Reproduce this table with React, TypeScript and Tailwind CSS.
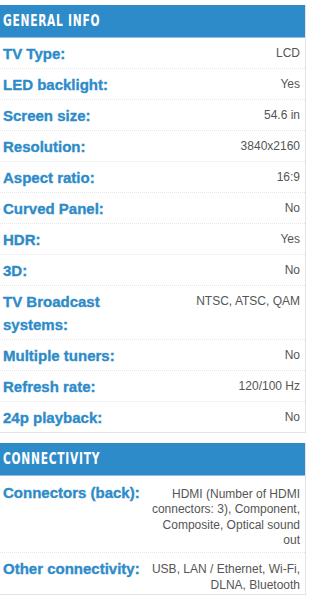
import React from "react";

type Spec = { label: string; value: string };

const general: Spec[] = [
  { label: "TV Type:", value: "LCD" },
  { label: "LED backlight:", value: "Yes" },
  { label: "Screen size:", value: "54.6 in" },
  { label: "Resolution:", value: "3840x2160" },
  { label: "Aspect ratio:", value: "16:9" },
  { label: "Curved Panel:", value: "No" },
  { label: "HDR:", value: "Yes" },
  { label: "3D:", value: "No" },
  { label: "TV Broadcast systems:", value: "NTSC, ATSC, QAM" },
  { label: "Multiple tuners:", value: "No" },
  { label: "Refresh rate:", value: "120/100 Hz" },
  { label: "24p playback:", value: "No" },
];

const connectivity: Spec[] = [
  { label: "Connectors (back):", value: "HDMI (Number of HDMI connectors: 3), Component, Composite, Optical sound out" },
  { label: "Other connectivity:", value: "USB, LAN / Ethernet, Wi-Fi, DLNA, Bluetooth" },
];

const SpecPanel = ({ title, rows, wide }: { title: string; rows: Spec[]; wide?: boolean }) => (
  <div className="w-[306px] border-r border-b border-[#e3e3e3]">
    <div className="h-[33px] bg-[#2e8bc9] border-b border-[#8fc0e3] pl-[3px] flex items-center">
      {/* condensed display face isn't installed, so squeeze the condensed sans */}
      <h3 className="inline-block origin-left scale-x-[0.74] text-white text-[16px] font-bold uppercase tracking-[1px] font-['DejaVu_Sans_Condensed',sans-serif]">
        {title}
      </h3>
    </div>
    {rows.map((row, i) => (
      <div
        key={row.label}
        className={`flex items-start pl-[3px] pr-[5px] ${wide ? (i === 0 ? "pt-[5px] pb-[3px]" : "pt-[4px] pb-[1px]") : "pt-[4px] pb-[3px]"} ${
          i < rows.length - 1 ? "border-b border-dotted border-[#e6e6e6]" : ""
        }`}
      >
        <div className="w-[147px] shrink-0 text-[15px] leading-[23px] font-bold text-[#2e8bc9] [-webkit-text-stroke:0.35px_#2e8bc9] font-['Liberation_Sans',Arial,sans-serif]">
          {row.label}
        </div>
        <div
          className={`flex-1 text-right text-[12px] leading-[15.5px] text-[#555] font-['Liberation_Sans',Arial,sans-serif] ${
            wide ? "mt-[5.5px]" : "mt-[3.5px]"
          }`}
        >
          {row.value}
        </div>
      </div>
    ))}
  </div>
);

export default function App() {
  return (
    <div className="w-[314px] h-[598px] bg-white pt-[5px] overflow-hidden">
      <SpecPanel title="General info" rows={general} />
      <div className="mt-[10px]">
        <SpecPanel title="Connectivity" rows={connectivity} wide />
      </div>
    </div>
  );
}
